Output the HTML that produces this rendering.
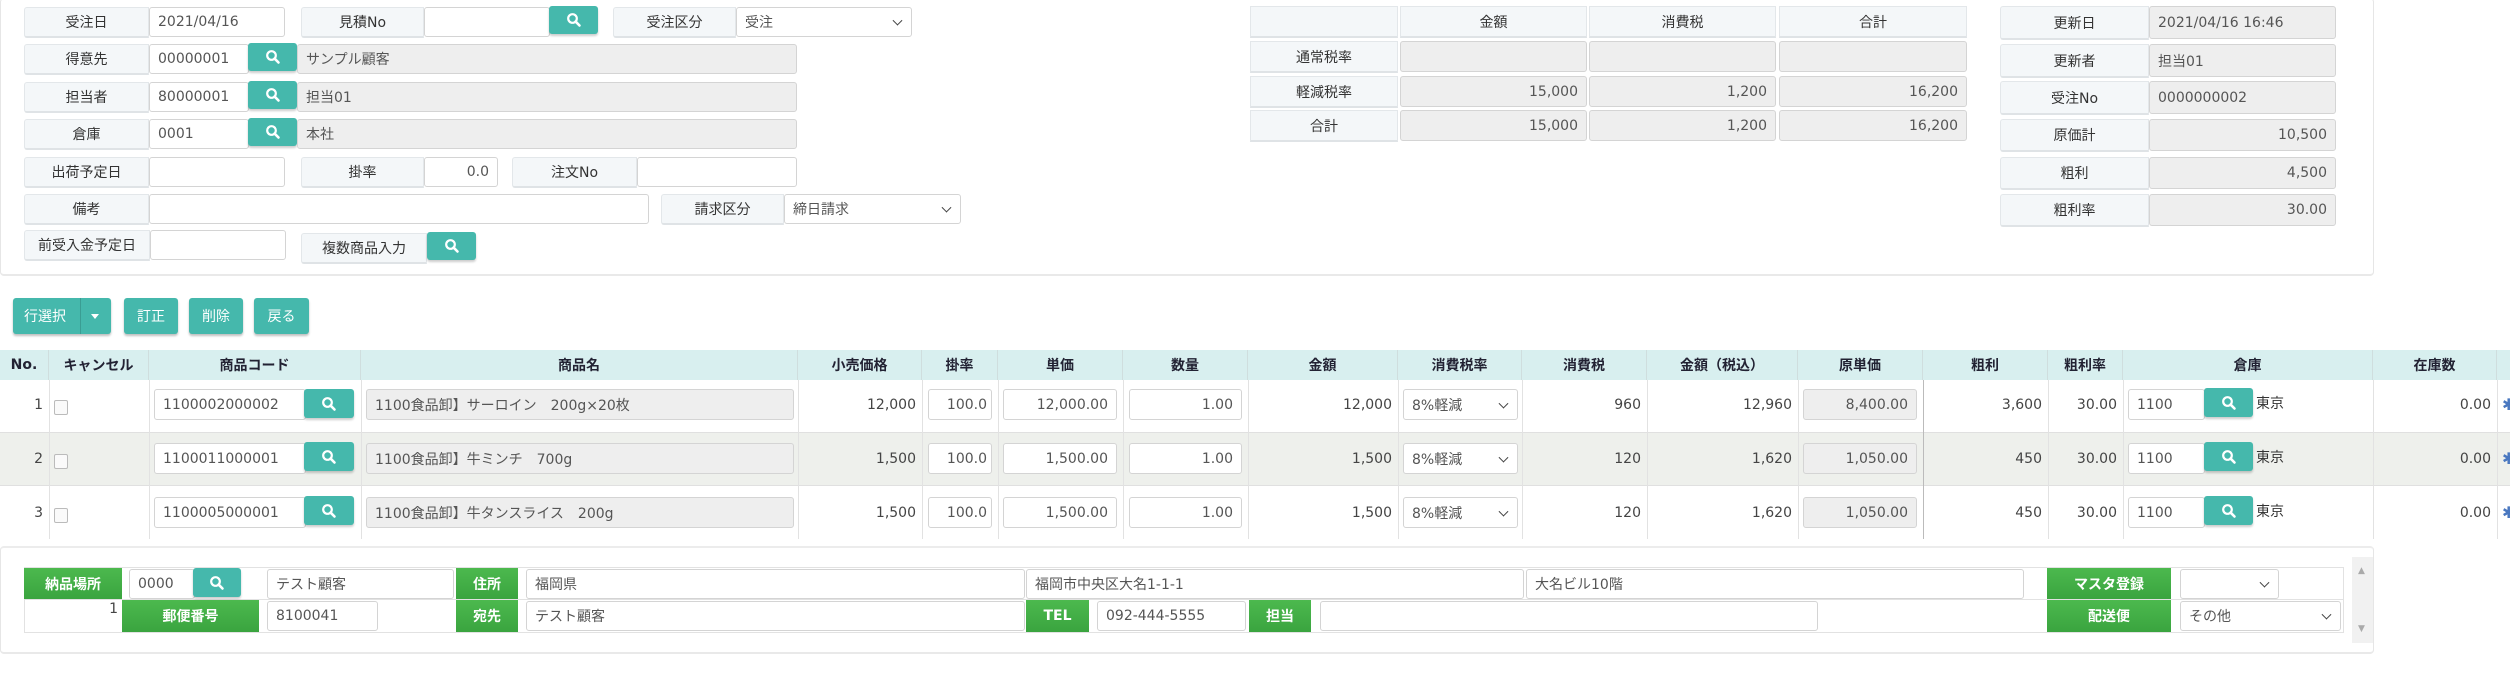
<!DOCTYPE html>
<html><head><meta charset="utf-8"><style>
*{margin:0;padding:0;box-sizing:border-box}
body{width:2510px;height:689px;background:#fff;position:relative;overflow:hidden;font-family:"DejaVu Sans","Noto Sans CJK JP",sans-serif;font-size:14px;color:#444}
.a{position:absolute}
.lb{position:absolute;background:#f4f7f9;border:1px solid #e3e7ea;border-bottom:2px solid #dfe3e6;display:flex;align-items:center;justify-content:center;color:#333;border-radius:3px 0 0 3px}
.in{position:absolute;background:#fff;border:1px solid #d4d4d4;border-radius:3px;display:flex;align-items:center;padding:0 8px;color:#555;white-space:nowrap;overflow:hidden}
.ro{background:#eee}
.r{justify-content:flex-end}
.bt{position:absolute;background:#45b8ac;border-radius:3px;box-shadow:0 2px 2px rgba(0,0,0,.2);display:flex;align-items:center;justify-content:center}
.sel::after{content:"";position:absolute;right:10px;top:50%;width:6px;height:6px;border-right:1.5px solid #444;border-bottom:1.5px solid #444;transform:translateY(-70%) rotate(45deg)}
.tb{position:absolute;background:#45b8ac;color:#fff;border-radius:3px;box-shadow:0 2px 2px rgba(0,0,0,.25);display:flex;align-items:center;justify-content:center;font-size:14px}
.th{position:absolute;top:350px;height:30px;background:#d8efef;font-weight:bold;color:#223;display:flex;align-items:center;justify-content:center;border-right:1px solid #cfdede}
.vl{position:absolute;top:380px;height:159px;width:1px;background:#e2e2e2}
.td{position:absolute;display:flex;align-items:center;justify-content:flex-end;color:#444}
.g{position:absolute;background:linear-gradient(#4cb94e,#3aa43f);color:#fff;font-weight:bold;display:flex;align-items:center;justify-content:center;font-size:14px}
</style></head><body>
<svg width="0" height="0" style="position:absolute"><defs><symbol id="m" viewBox="0 0 16 16"><circle cx="6.5" cy="6.5" r="4.3" fill="none" stroke="#fff" stroke-width="2.2"/><line x1="9.6" y1="9.6" x2="13.5" y2="13.5" stroke="#fff" stroke-width="2.6" stroke-linecap="round"/></symbol></defs></svg>

<!-- top panel -->
<div class="a" style="left:0;top:-2px;width:2374px;height:278px;border:1px solid #e6e6e6;border-radius:4px;border-bottom:2px solid #e9e9e9"></div>

<div class="lb" style="left:24px;top:7px;width:125px;height:31px">受注日</div>
<div class="in" style="left:149px;top:7px;width:136px;height:30px">2021/04/16</div>
<div class="lb" style="left:301px;top:7px;width:123px;height:31px">見積No</div>
<div class="in" style="left:424px;top:7px;width:126px;height:30px"></div>
<div class="bt" style="left:549px;top:6px;width:49px;height:28px"><svg width="16" height="16"><use href="#m"/></svg></div>
<div class="lb" style="left:613px;top:7px;width:123px;height:31px">受注区分</div>
<div class="in sel" style="left:736px;top:7px;width:176px;height:30px">受注</div>

<div class="lb" style="left:24px;top:44px;width:125px;height:31px">得意先</div>
<div class="in" style="left:149px;top:44px;width:100px;height:30px">00000001</div>
<div class="bt" style="left:248px;top:43px;width:49px;height:28px"><svg width="16" height="16"><use href="#m"/></svg></div>
<div class="in ro" style="left:297px;top:44px;width:500px;height:30px">サンプル顧客</div>

<div class="lb" style="left:24px;top:82px;width:125px;height:31px">担当者</div>
<div class="in" style="left:149px;top:82px;width:100px;height:30px">80000001</div>
<div class="bt" style="left:248px;top:81px;width:49px;height:28px"><svg width="16" height="16"><use href="#m"/></svg></div>
<div class="in ro" style="left:297px;top:82px;width:500px;height:30px">担当01</div>

<div class="lb" style="left:24px;top:119px;width:125px;height:31px">倉庫</div>
<div class="in" style="left:149px;top:119px;width:100px;height:30px">0001</div>
<div class="bt" style="left:248px;top:118px;width:49px;height:28px"><svg width="16" height="16"><use href="#m"/></svg></div>
<div class="in ro" style="left:297px;top:119px;width:500px;height:30px">本社</div>

<div class="lb" style="left:24px;top:157px;width:125px;height:31px">出荷予定日</div>
<div class="in" style="left:149px;top:157px;width:136px;height:30px"></div>
<div class="lb" style="left:301px;top:157px;width:123px;height:31px">掛率</div>
<div class="in r" style="left:424px;top:157px;width:74px;height:30px">0.0</div>
<div class="lb" style="left:512px;top:157px;width:125px;height:31px">注文No</div>
<div class="in" style="left:637px;top:157px;width:160px;height:30px"></div>

<div class="lb" style="left:24px;top:194px;width:125px;height:31px">備考</div>
<div class="in" style="left:149px;top:194px;width:500px;height:30px"></div>
<div class="lb" style="left:661px;top:194px;width:123px;height:31px">請求区分</div>
<div class="in sel" style="left:784px;top:194px;width:177px;height:30px">締日請求</div>

<div class="lb" style="left:24px;top:230px;width:126px;height:31px">前受入金予定日</div>
<div class="in" style="left:150px;top:230px;width:136px;height:30px"></div>
<div class="lb" style="left:301px;top:233px;width:126px;height:31px">複数商品入力</div>
<div class="bt" style="left:427px;top:232px;width:49px;height:28px"><svg width="16" height="16"><use href="#m"/></svg></div>

<!-- summary -->
<div class="lb" style="left:1250px;top:6px;width:148px;height:32px;border-radius:0"></div>
<div class="lb" style="left:1400px;top:6px;width:187px;height:32px;border-radius:0">金額</div>
<div class="lb" style="left:1589px;top:6px;width:187px;height:32px;border-radius:0">消費税</div>
<div class="lb" style="left:1779px;top:6px;width:188px;height:32px;border-radius:0">合計</div>
<div class="lb" style="left:1250px;top:41px;width:148px;height:32px;border-radius:0">通常税率</div>
<div class="in ro r" style="left:1400px;top:41px;width:187px;height:31px"></div>
<div class="in ro r" style="left:1589px;top:41px;width:187px;height:31px"></div>
<div class="in ro r" style="left:1779px;top:41px;width:188px;height:31px"></div>
<div class="lb" style="left:1250px;top:76px;width:148px;height:32px;border-radius:0">軽減税率</div>
<div class="in ro r" style="left:1400px;top:76px;width:187px;height:31px">15,000</div>
<div class="in ro r" style="left:1589px;top:76px;width:187px;height:31px">1,200</div>
<div class="in ro r" style="left:1779px;top:76px;width:188px;height:31px">16,200</div>
<div class="lb" style="left:1250px;top:110px;width:148px;height:32px;border-radius:0">合計</div>
<div class="in ro r" style="left:1400px;top:110px;width:187px;height:31px">15,000</div>
<div class="in ro r" style="left:1589px;top:110px;width:187px;height:31px">1,200</div>
<div class="in ro r" style="left:1779px;top:110px;width:188px;height:31px">16,200</div>

<div class="lb" style="left:2000px;top:6px;width:149px;height:34px">更新日</div>
<div class="in ro" style="left:2149px;top:6px;width:187px;height:33px">2021/04/16 16:46</div>
<div class="lb" style="left:2000px;top:44px;width:149px;height:34px">更新者</div>
<div class="in ro" style="left:2149px;top:44px;width:187px;height:33px">担当01</div>
<div class="lb" style="left:2000px;top:81px;width:149px;height:34px">受注No</div>
<div class="in ro" style="left:2149px;top:81px;width:187px;height:33px">0000000002</div>
<div class="lb" style="left:2000px;top:119px;width:149px;height:33px">原価計</div>
<div class="in ro r" style="left:2149px;top:119px;width:187px;height:32px">10,500</div>
<div class="lb" style="left:2000px;top:157px;width:149px;height:33px">粗利</div>
<div class="in ro r" style="left:2149px;top:157px;width:187px;height:32px">4,500</div>
<div class="lb" style="left:2000px;top:194px;width:149px;height:33px">粗利率</div>
<div class="in ro r" style="left:2149px;top:194px;width:187px;height:32px">30.00</div>

<!-- toolbar -->
<div class="tb" style="left:13px;top:298px;width:98px;height:36px;justify-content:flex-start;padding-left:11px">行選択</div>
<div class="a" style="left:80px;top:298px;width:1px;height:36px;background:#3a9d93"></div>
<div class="a" style="left:91px;top:314px;width:0;height:0;border-left:4px solid transparent;border-right:4px solid transparent;border-top:5px solid #fff"></div>
<div class="tb" style="left:124px;top:298px;width:54px;height:36px">訂正</div>
<div class="tb" style="left:189px;top:298px;width:54px;height:36px">削除</div>
<div class="tb" style="left:254px;top:298px;width:55px;height:36px">戻る</div>

<!-- table header -->
<div class="th" style="left:0;width:49px">No.</div>
<div class="th" style="left:49px;width:100px">キャンセル</div>
<div class="th" style="left:149px;width:212px">商品コード</div>
<div class="th" style="left:361px;width:437px">商品名</div>
<div class="th" style="left:798px;width:124px">小売価格</div>
<div class="th" style="left:922px;width:76px">掛率</div>
<div class="th" style="left:998px;width:125px">単価</div>
<div class="th" style="left:1123px;width:125px">数量</div>
<div class="th" style="left:1248px;width:150px">金額</div>
<div class="th" style="left:1398px;width:124px">消費税率</div>
<div class="th" style="left:1522px;width:125px">消費税</div>
<div class="th" style="left:1647px;width:151px">金額（税込）</div>
<div class="th" style="left:1798px;width:125px">原単価</div>
<div class="th" style="left:1923px;width:125px">粗利</div>
<div class="th" style="left:2048px;width:75px">粗利率</div>
<div class="th" style="left:2123px;width:250px">倉庫</div>
<div class="th" style="left:2373px;width:124px">在庫数</div>
<div class="th" style="left:2497px;width:13px;border-right:0"></div>

<!-- row backgrounds -->
<div class="a" style="left:0;top:432px;width:2510px;height:54px;background:#eef0ec;border-top:1px solid #e0e0e0;border-bottom:1px solid #e0e0e0"></div>
<div class="vl" style="left:49px"></div><div class="vl" style="left:149px"></div><div class="vl" style="left:361px"></div><div class="vl" style="left:798px"></div><div class="vl" style="left:922px"></div><div class="vl" style="left:998px"></div><div class="vl" style="left:1123px"></div><div class="vl" style="left:1248px"></div><div class="vl" style="left:1398px"></div><div class="vl" style="left:1522px"></div><div class="vl" style="left:1647px"></div><div class="vl" style="left:1798px"></div><div class="vl" style="left:1923px;background:#bbb"></div><div class="vl" style="left:2048px"></div><div class="vl" style="left:2123px"></div><div class="vl" style="left:2373px"></div><div class="vl" style="left:2497px"></div>

<!-- rows -->
<div id="rows"></div>
<!-- row 1 -->
<div class="td" style="left:0;top:389px;width:43px;height:32px">1</div>
<div class="a" style="left:54px;top:400px;width:14px;height:15px;border:1px solid #bbb;border-radius:2px;background:#fafafa"></div>
<div class="in" style="left:154px;top:389px;width:152px;height:31px">1100002000002</div>
<div class="bt" style="left:304px;top:389px;width:50px;height:29px"><svg width="16" height="16"><use href="#m"/></svg></div>
<div class="in ro" style="left:366px;top:389px;width:428px;height:31px">1100食品卸】サーロイン　200g×20枚</div>
<div class="td" style="left:798px;top:389px;width:118px;height:32px">12,000</div>
<div class="in r" style="left:928px;top:389px;width:64px;height:31px;padding:0 4px">100.0</div>
<div class="in r" style="left:1003px;top:389px;width:114px;height:31px">12,000.00</div>
<div class="in r" style="left:1129px;top:389px;width:113px;height:31px">1.00</div>
<div class="td" style="left:1248px;top:389px;width:144px;height:32px">12,000</div>
<div class="in sel" style="left:1403px;top:389px;width:115px;height:31px">8%軽減</div>
<div class="td" style="left:1522px;top:389px;width:119px;height:32px">960</div>
<div class="td" style="left:1647px;top:389px;width:145px;height:32px">12,960</div>
<div class="in ro r" style="left:1803px;top:389px;width:114px;height:31px">8,400.00</div>
<div class="td" style="left:1923px;top:389px;width:119px;height:32px">3,600</div>
<div class="td" style="left:2048px;top:389px;width:69px;height:32px">30.00</div>
<div class="in" style="left:2128px;top:389px;width:77px;height:31px">1100</div>
<div class="bt" style="left:2204px;top:388px;width:49px;height:29px"><svg width="16" height="16"><use href="#m"/></svg></div>
<div class="a" style="left:2256px;top:393px;color:#333">東京</div>
<div class="td" style="left:2373px;top:389px;width:118px;height:32px">0.00</div>
<div class="a" style="left:2502px;top:395px;color:#4a78c0;font-size:16px">✱</div>
<!-- row 2 -->
<div class="td" style="left:0;top:443px;width:43px;height:32px">2</div>
<div class="a" style="left:54px;top:454px;width:14px;height:15px;border:1px solid #bbb;border-radius:2px;background:#fafafa"></div>
<div class="in" style="left:154px;top:443px;width:152px;height:31px">1100011000001</div>
<div class="bt" style="left:304px;top:442px;width:50px;height:29px"><svg width="16" height="16"><use href="#m"/></svg></div>
<div class="in ro" style="left:366px;top:443px;width:428px;height:31px">1100食品卸】牛ミンチ　700g</div>
<div class="td" style="left:798px;top:443px;width:118px;height:32px">1,500</div>
<div class="in r" style="left:928px;top:443px;width:64px;height:31px;padding:0 4px">100.0</div>
<div class="in r" style="left:1003px;top:443px;width:114px;height:31px">1,500.00</div>
<div class="in r" style="left:1129px;top:443px;width:113px;height:31px">1.00</div>
<div class="td" style="left:1248px;top:443px;width:144px;height:32px">1,500</div>
<div class="in sel" style="left:1403px;top:443px;width:115px;height:31px">8%軽減</div>
<div class="td" style="left:1522px;top:443px;width:119px;height:32px">120</div>
<div class="td" style="left:1647px;top:443px;width:145px;height:32px">1,620</div>
<div class="in ro r" style="left:1803px;top:443px;width:114px;height:31px">1,050.00</div>
<div class="td" style="left:1923px;top:443px;width:119px;height:32px">450</div>
<div class="td" style="left:2048px;top:443px;width:69px;height:32px">30.00</div>
<div class="in" style="left:2128px;top:443px;width:77px;height:31px">1100</div>
<div class="bt" style="left:2204px;top:442px;width:49px;height:29px"><svg width="16" height="16"><use href="#m"/></svg></div>
<div class="a" style="left:2256px;top:447px;color:#333">東京</div>
<div class="td" style="left:2373px;top:443px;width:118px;height:32px">0.00</div>
<div class="a" style="left:2502px;top:449px;color:#4a78c0;font-size:16px">✱</div>
<!-- row 3 -->
<div class="td" style="left:0;top:497px;width:43px;height:32px">3</div>
<div class="a" style="left:54px;top:508px;width:14px;height:15px;border:1px solid #bbb;border-radius:2px;background:#fafafa"></div>
<div class="in" style="left:154px;top:497px;width:152px;height:31px">1100005000001</div>
<div class="bt" style="left:304px;top:496px;width:50px;height:29px"><svg width="16" height="16"><use href="#m"/></svg></div>
<div class="in ro" style="left:366px;top:497px;width:428px;height:31px">1100食品卸】牛タンスライス　200g</div>
<div class="td" style="left:798px;top:497px;width:118px;height:32px">1,500</div>
<div class="in r" style="left:928px;top:497px;width:64px;height:31px;padding:0 4px">100.0</div>
<div class="in r" style="left:1003px;top:497px;width:114px;height:31px">1,500.00</div>
<div class="in r" style="left:1129px;top:497px;width:113px;height:31px">1.00</div>
<div class="td" style="left:1248px;top:497px;width:144px;height:32px">1,500</div>
<div class="in sel" style="left:1403px;top:497px;width:115px;height:31px">8%軽減</div>
<div class="td" style="left:1522px;top:497px;width:119px;height:32px">120</div>
<div class="td" style="left:1647px;top:497px;width:145px;height:32px">1,620</div>
<div class="in ro r" style="left:1803px;top:497px;width:114px;height:31px">1,050.00</div>
<div class="td" style="left:1923px;top:497px;width:119px;height:32px">450</div>
<div class="td" style="left:2048px;top:497px;width:69px;height:32px">30.00</div>
<div class="in" style="left:2128px;top:497px;width:77px;height:31px">1100</div>
<div class="bt" style="left:2204px;top:496px;width:49px;height:29px"><svg width="16" height="16"><use href="#m"/></svg></div>
<div class="a" style="left:2256px;top:501px;color:#333">東京</div>
<div class="td" style="left:2373px;top:497px;width:118px;height:32px">0.00</div>
<div class="a" style="left:2502px;top:503px;color:#4a78c0;font-size:16px">✱</div>

<!-- bottom panel -->
<div class="a" style="left:0;top:546px;width:2374px;height:108px;border:1px solid #e6e6e6;border-radius:4px;border-top:2px solid #ececec;border-bottom:2px solid #e9e9e9"></div>
<div class="a" style="left:24px;top:567px;width:2320px;height:66px;border:1px solid #e2e2e2"></div>
<div class="a" style="left:24px;top:599px;width:2320px;height:1px;background:#e2e2e2"></div>
<div class="a" style="left:2352px;top:557px;width:21px;height:86px;background:#f1f1f1"></div>
<div class="a" style="left:2358px;top:566px;font-size:9px;color:#aaa">▲</div>
<div class="a" style="left:2358px;top:624px;font-size:9px;color:#aaa">▼</div>

<div class="g" style="left:24px;top:568px;width:98px;height:31px">納品場所</div>
<div class="in" style="left:129px;top:569px;width:66px;height:30px">0000</div>
<div class="bt" style="left:193px;top:568px;width:48px;height:29px"><svg width="16" height="16"><use href="#m"/></svg></div>
<div class="in" style="left:267px;top:569px;width:187px;height:30px">テスト顧客</div>
<div class="g" style="left:456px;top:568px;width:62px;height:31px">住所</div>
<div class="in" style="left:526px;top:569px;width:499px;height:30px">福岡県</div>
<div class="in" style="left:1026px;top:569px;width:498px;height:30px">福岡市中央区大名1-1-1</div>
<div class="in" style="left:1526px;top:569px;width:498px;height:30px">大名ビル10階</div>
<div class="g" style="left:2047px;top:568px;width:124px;height:31px">マスタ登録</div>
<div class="in sel" style="left:2180px;top:569px;width:99px;height:30px"></div>

<div class="td" style="left:24px;top:601px;width:94px;height:20px;align-items:flex-start">1</div>
<div class="g" style="left:122px;top:600px;width:137px;height:32px">郵便番号</div>
<div class="in" style="left:267px;top:601px;width:111px;height:30px">8100041</div>
<div class="g" style="left:456px;top:600px;width:62px;height:32px">宛先</div>
<div class="in" style="left:526px;top:601px;width:499px;height:30px">テスト顧客</div>
<div class="g" style="left:1026px;top:600px;width:63px;height:32px">TEL</div>
<div class="in" style="left:1097px;top:601px;width:149px;height:30px">092-444-5555</div>
<div class="g" style="left:1249px;top:600px;width:62px;height:32px">担当</div>
<div class="in" style="left:1320px;top:601px;width:498px;height:30px"></div>
<div class="g" style="left:2047px;top:600px;width:124px;height:32px">配送便</div>
<div class="in sel" style="left:2180px;top:601px;width:161px;height:30px">その他</div>
</body></html>
